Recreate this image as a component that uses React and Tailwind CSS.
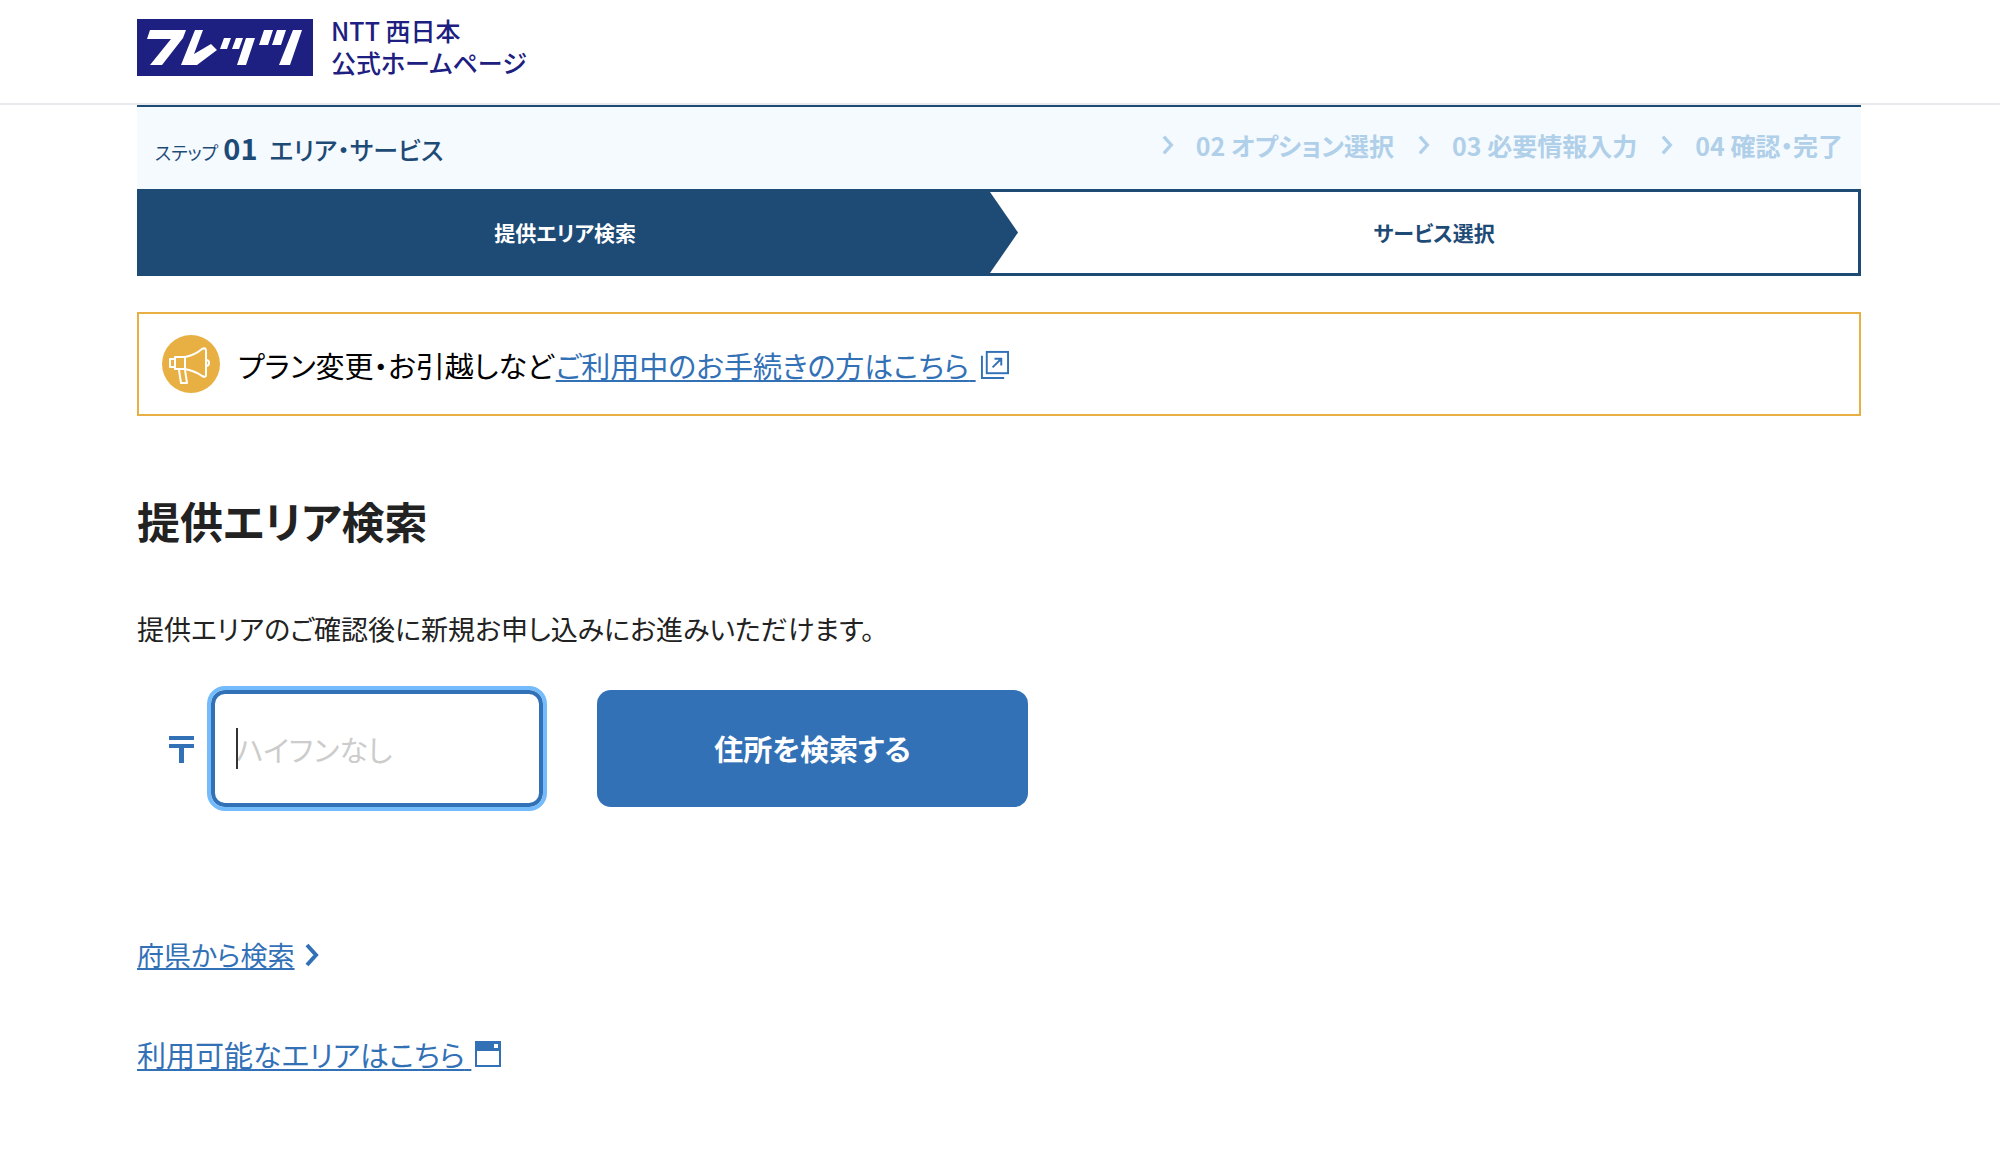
import { useState } from "react";

const nextSteps = [
  { no: "02", label: "オプション選択" },
  { no: "03", label: "必要情報入力" },
  { no: "04", label: "確認・完了" },
];

function Logo() {
  return (
    <svg viewBox="0 0 176 57" className="mt-[5px] w-44 h-[57px]" aria-hidden="true">
      <rect width="176" height="57" fill="#1d2080" />
      <g fill="#fff">
        <path d="M13 11H49L46 19L25 46H13L34 20H10Z" />
        <path d="M58 11H66L57 35L74 25L80 31L60 46H44Z" />
        <path d="M87 19H94L90 30H83Z" />
        <path d="M99 19H106L102 30H95Z" />
        <path d="M109 19H118L109 46H100Z" />
        <path d="M127 11H136L131 26H122Z" />
        <path d="M140 11H149L144 26H135Z" />
        <path d="M156 11H165L153 46H142Z" />
      </g>
    </svg>
  );
}

function Chevron({ className }) {
  return (
    <svg viewBox="0 0 14 24" className={className} fill="none" aria-hidden="true">
      <path d="M2 2L11 12L2 22" stroke="currentColor" strokeWidth="4" />
    </svg>
  );
}

function MegaphoneIcon() {
  return (
    <svg viewBox="0 0 58 58" className="size-[58px] shrink-0" aria-hidden="true">
      <circle cx="29" cy="29" r="29" fill="#e8b042" />
      <g fill="none" stroke="#fff" strokeWidth="2" strokeLinejoin="round">
        <rect x="8" y="24" width="5" height="8" />
        <rect x="13" y="22" width="10" height="12" />
        <path d="M23 22Q33 20 40 14Q44 12 44 16V40Q44 43 40 41Q33 36 23 34Z" />
        <path d="M44 25Q47 25 47 28Q47 31 44 31" />
        <path d="M17 35L19 48H25L23 35" />
      </g>
    </svg>
  );
}

function ExternalIcon() {
  return (
    <svg viewBox="0 0 30 30" className="size-[29px]" fill="none" stroke="#3371b7" strokeWidth="2" aria-hidden="true">
      <rect x="7" y="2" width="22" height="22" />
      <path d="M2 6V29H25" />
      <path d="M13 18L22 9M15 9H22V16" />
    </svg>
  );
}

function WindowIcon() {
  return (
    <svg viewBox="0 0 26 26" className="size-[26px]" aria-hidden="true">
      <rect x="1" y="1" width="24" height="24" fill="#fff" stroke="#3371b7" strokeWidth="2" />
      <rect width="26" height="10" fill="#3371b7" />
      <rect x="19" y="3" width="4" height="4" fill="#fff" />
    </svg>
  );
}

export default function App() {
  const [zip, setZip] = useState("");

  return (
    <div className="min-h-screen bg-white pb-20 text-[#222] font-['Noto_Sans_CJK_JP',sans-serif] [font-feature-settings:'palt']">
      <header className="border-b-2 border-[#e8e9ec] pl-[137px] pr-[139px] pt-3.5 pb-[25px]">
        <a href="#" className="flex w-fit items-start gap-[18px] text-[#1d2080]">
          <Logo />
          <span className="text-[25px] leading-[32px] font-medium">
            NTT 西日本
            <br />
            公式ホームページ
          </span>
        </a>
      </header>

      <main className="pl-[137px] pr-[139px]">
        <div className="flex items-center justify-between border-t-2 border-[#1e4a76] bg-[#f5faff] pl-[18px] pr-[18px] text-[25px] leading-[32px]">
          <p className="flex items-baseline pt-2.5 pb-2 font-medium text-[#1e4a76]">
            <span className="text-[18px] font-normal">ステップ</span>
            <span className="ml-[5px] text-[29px] font-bold">01</span>
            <span className="ml-3">エリア・サービス</span>
          </p>
          <ol className="flex pt-[22px] pb-7 font-bold text-[#b0cfe9]">
            {nextSteps.map((step) => (
              <li key={step.no} className="flex items-center">
                <Chevron className="ml-6 mr-[22px] h-5 w-3" />
                {step.no} {step.label}
              </li>
            ))}
          </ol>
        </div>

        <ol className="flex border-3 border-[#1e4a76] text-center text-[21px] leading-[32px] font-bold">
          <li className="flex w-[49.5%] bg-[#1e4a76] text-white">
            <span className="grow pt-6 pb-[25px]">提供エリア検索</span>
          </li>
          <li className="flex grow text-[#1e4a76]">
            <svg viewBox="0 0 28 82" preserveAspectRatio="none" className="w-7 h-[81px]" aria-hidden="true">
              <path d="M0 0L28 41L0 82Z" fill="#1e4a76" />
            </svg>
            <span className="grow pt-6 pb-[25px] pr-2">サービス選択</span>
          </li>
        </ol>

        <div className="mt-9 flex items-center border-2 border-[#e8b042] py-[21px] pl-[23px] text-[29px] leading-[42px] text-black">
          <MegaphoneIcon />
          <p className="ml-[18px] mr-0.5 pt-0.5">プラン変更・お引越しなど</p>
          <a href="#" className="flex items-center gap-1 text-[#3371b7]">
            <span className="pt-0.5 whitespace-pre underline decoration-2 underline-offset-2 [text-decoration-skip-ink:none]">
              ご利用中のお手続きの方はこちら{" "}
            </span>
            <ExternalIcon />
          </a>
        </div>

        <h1 className="mt-[72px] text-[43px] leading-[64px] font-bold">提供エリア検索</h1>
        <p className="mt-[57px] text-[27px] leading-[40px]">
          提供エリアのご確認後に新規お申し込みにお進みいただけます。
        </p>

        <form className="mt-[41px] flex items-center pl-8" onSubmit={(e) => e.preventDefault()}>
          <label htmlFor="zip" aria-label="郵便番号">
            <svg viewBox="0 0 26 28" className="w-[26px] h-7" fill="#3371b7" aria-hidden="true">
              <path d="M0 1H25V5H0ZM0 9H25V13H15V28H10V13H0Z" />
            </svg>
          </label>
          <div className="relative ml-4">
            <input
              id="zip"
              type="text"
              inputMode="numeric"
              placeholder="ハイフンなし"
              value={zip}
              onChange={(e) => setZip(e.target.value)}
              className="block h-[117px] w-[332px] rounded-[14px] border-4 border-[#3371b7] px-[21px] text-[29px] outline-4 outline-[#73bbfb] placeholder:text-[#ccc]"
            />
            {!zip && <span className="absolute left-[25px] top-[38px] h-[41px] w-0.5 bg-[#333]" />}
          </div>
          <button
            type="submit"
            className="ml-[54px] h-[117px] w-[431px] rounded-[14px] bg-[#3371b7] text-[29px] font-bold text-white"
          >
            住所を検索する
          </button>
        </form>

        <ul className="mt-32 leading-[40px] text-[#3371b7]">
          <li>
            <a href="#" className="flex w-fit items-center gap-2.5 text-[27px]">
              <span className="underline decoration-2 underline-offset-2 [text-decoration-skip-ink:none]">
                府県から検索
              </span>
              <Chevron className="h-6 w-3.5" />
            </a>
          </li>
          <li className="mt-[59px]">
            <a href="#" className="flex w-fit items-center gap-1 text-[29px]">
              <span className="whitespace-pre underline decoration-2 underline-offset-2 [text-decoration-skip-ink:none]">
                利用可能なエリアはこちら{" "}
              </span>
              <WindowIcon />
            </a>
          </li>
        </ul>
      </main>
    </div>
  );
}
